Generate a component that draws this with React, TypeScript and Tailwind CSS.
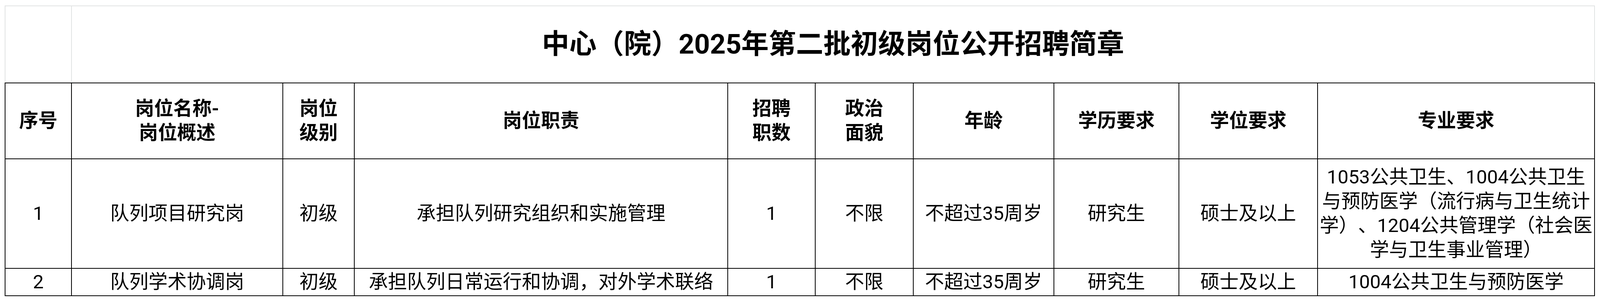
const cell =
  "flex items-center justify-center text-center border-r-2 border-b-2 border-black";

const headers: React.ReactNode[] = [
  "序号",
  <>
    岗位名称-
    <br />
    岗位概述
  </>,
  <>
    岗位
    <br />
    级别
  </>,
  "岗位职责",
  <>
    招聘
    <br />
    职数
  </>,
  <>
    政治
    <br />
    面貌
  </>,
  "年龄",
  "学历要求",
  "学位要求",
  "专业要求",
];

const rows: React.ReactNode[][] = [
  [
    "1",
    "队列项目研究岗",
    "初级",
    "承担队列研究组织和实施管理",
    "1",
    "不限",
    "不超过35周岁",
    "研究生",
    "硕士及以上",
    <span className="whitespace-nowrap">
      1053公共卫生、1004公共卫生
      <br />
      与预防医学（流行病与卫生统计
      <br />
      学）、1204公共管理学（社会医
      <br />
      学与卫生事业管理）
    </span>,
  ],
  [
    "2",
    "队列学术协调岗",
    "初级",
    "承担队列日常运行和协调，对外学术联络",
    "1",
    "不限",
    "不超过35周岁",
    "研究生",
    "硕士及以上",
    "1004公共卫生与预防医学",
  ],
];

export default function App() {
  return (
    <div className="w-full h-[772px] bg-white pt-[14px] pl-[12px] text-black font-[Roboto,'Noto_Sans_CJK_SC',sans-serif] [text-spacing-trim:space-all]">
      <div className="w-[4071px]">
        {/* title row, light borders */}
        <div className="flex h-[197px] border-t-2 border-x-2 border-[#e1e3e3]">
          <div className="w-[170px] border-r-2 border-[#e1e3e3]" />
          <div className="flex flex-1 items-center justify-center text-[70px] font-bold">
            中心（院）2025年第二批初级岗位公开招聘简章
          </div>
        </div>

        <div className="grid grid-cols-[170px_541px_183px_956px_224px_251px_360px_320px_355px_709px] grid-rows-[194px_280px_70px] border-t-2 border-l-2 border-black text-[49px] leading-[62px]">
          {headers.map((h, i) => (
            <div key={"h" + i} className={cell + " font-bold"}>
              <div>{h}</div>
            </div>
          ))}
          {rows.map((r, ri) =>
            r.map((c, ci) => (
              <div key={ri + "-" + ci} className={cell}>
                <div>{c}</div>
              </div>
            ))
          )}
        </div>
      </div>
    </div>
  );
}
